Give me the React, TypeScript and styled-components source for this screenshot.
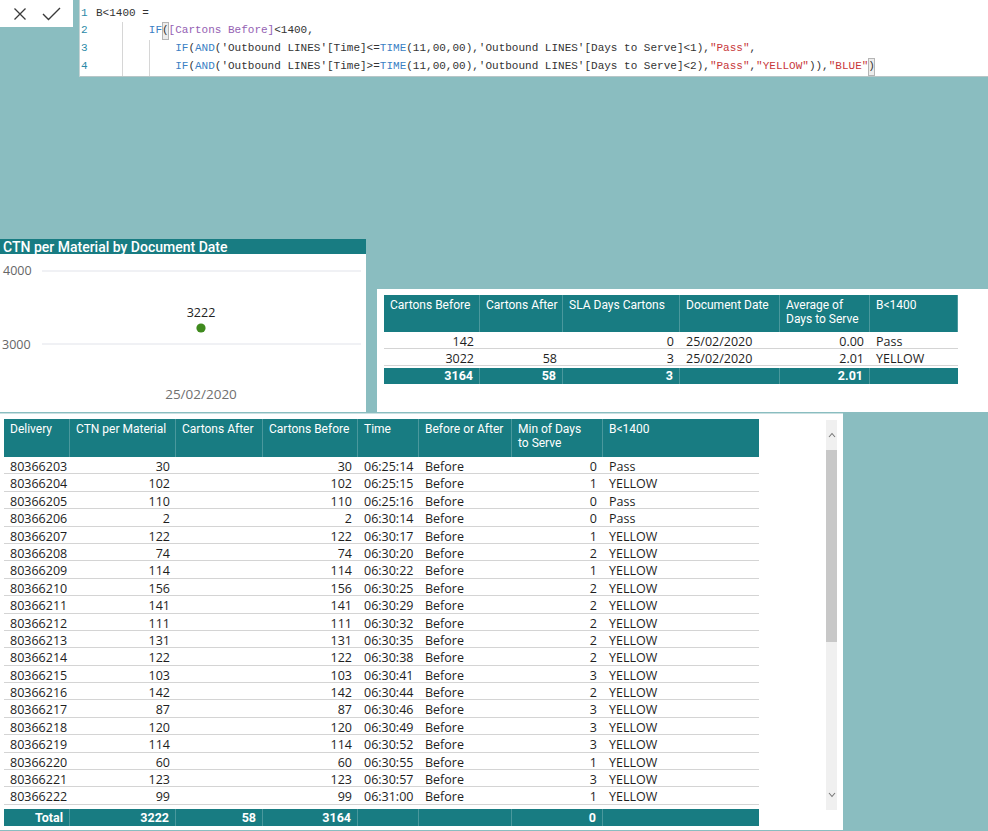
import React from 'react';
import styled, { createGlobalStyle } from 'styled-components';

const TEAL = '#187c82';
const BACK = '#8abdc0';

const GlobalStyle = createGlobalStyle`
  html, body {
    margin: 0;
    padding: 0;
    background: ${BACK};
  }
  body {
    width: 988px;
    height: 831px;
    overflow: hidden;
    font-family: 'Open Sans', 'Noto Sans', sans-serif;
  }
`;

const Page = styled.div`
  width: 988px;
  height: 831px;
  display: flex;
  flex-direction: column;
`;

/* ---------- formula bar ---------- */

const FormulaBar = styled.div`
  display: flex;
  align-items: flex-start;
  gap: 6px;
  height: 78px;
`;

const CommitBox = styled.div`
  width: 73px;
  height: 27px;
  background: #fff;
  display: flex;
  align-items: center;
  justify-content: space-between;
  padding: 0 12px 0 13px;
  box-sizing: border-box;
`;

const Editor = styled.div`
  flex: 1;
  height: 77px;
  background: #fff;
  border-left: 1px solid #c5d3d4;
  border-bottom: 1px solid #b7c6c7;
  box-sizing: border-box;
  padding-top: 4.5px;
  display: flex;
  flex-direction: column;
  font-family: 'Liberation Mono', 'DejaVu Sans Mono', monospace;
  font-size: 11px;
  color: #333;
`;

const CodeLine = styled.div`
  display: flex;
  height: 17.8px;
  line-height: 17.8px;
  white-space: pre;
`;

const LineNo = styled.span`
  width: 16px;
  padding-left: 1px;
  color: #2b8aa8;
  box-sizing: border-box;
`;

const Indent = styled.span<{ $guide?: boolean }>`
  width: 4ch;
  flex: none;
  border-left: 1px solid ${(p) => (p.$guide ? '#d6d6d6' : 'transparent')};
  box-sizing: border-box;
`;

const Kw = styled.span`
  color: #3b7fc4;
`;
const Col = styled.span`
  color: #9462b3;
`;
const Str = styled.span`
  color: #c8373a;
`;
const Match = styled.span`
  background: #ececec;
  outline: 1px solid #b5b5b5;
  outline-offset: -1px;
`;

/* ---------- middle row ---------- */

const MidRow = styled.div`
  display: flex;
  align-items: flex-end;
  gap: 11px;
  margin-top: 161px;
  height: 173px;
`;

const ChartPanel = styled.div`
  width: 366px;
  height: 173px;
  display: flex;
  flex-direction: column;
  background: #fff;
`;

const PanelTitle = styled.div`
  height: 15px;
  background: ${TEAL};
  color: #fff;
  font-family: Roboto, 'Open Sans', sans-serif;
  font-weight: 500;
  font-size: 14px;
  line-height: 16px;
  padding-left: 3px;
  white-space: nowrap;
  overflow: hidden;
`;

const SmallPanel = styled.div`
  flex: 1;
  height: 123px;
  background: #fff;
  padding: 6px 0 0 7px;
  box-sizing: border-box;
`;

const SmallGrid = styled.div`
  display: grid;
  grid-template-columns: 96px 83px 117px 100px 90px 88px;
  width: 574px;
`;

const HeadCell = styled.div<{ $h: number }>`
  height: ${(p) => p.$h}px;
  background: ${TEAL};
  color: #fff;
  font-family: Roboto, 'Open Sans', sans-serif;
  font-size: 12px;
  line-height: 14px;
  padding: 3px 3px 0 6px;
  box-sizing: border-box;
  border-right: 1px solid rgba(255, 255, 255, 0.22);
  white-space: pre;
  overflow: hidden;
  &:last-child {
    border-right: none;
  }
`;

const Cell = styled.div<{ $right?: boolean; $h: number }>`
  height: ${(p) => p.$h}px;
  line-height: ${(p) => p.$h + 2.5}px;
  border-bottom: 1px solid #d4d4d4;
  box-sizing: border-box;
  font-size: 12.5px;
  color: #1e1e1e;
  padding: 0 6px;
  text-align: ${(p) => (p.$right ? 'right' : 'left')};
  white-space: nowrap;
  overflow: hidden;
`;

const TotalCell = styled.div<{ $right?: boolean; $h: number }>`
  height: ${(p) => p.$h}px;
  line-height: ${(p) => p.$h}px;
  background: ${TEAL};
  color: #fff;
  font-family: Roboto, 'Open Sans', sans-serif;
  font-weight: 700;
  font-size: 12.5px;
  padding: 0 6px;
  box-sizing: border-box;
  border-right: 1px solid rgba(255, 255, 255, 0.22);
  text-align: ${(p) => (p.$right ? 'right' : 'left')};
  &:last-child {
    border-right: none;
  }
`;

const Gap = styled.div`
  grid-column: 1 / -1;
  height: 2px;
`;

/* ---------- big table ---------- */

const BigPanel = styled.div`
  width: 843px;
  height: 417px;
  margin-top: 1px;
  background: #fff;
  border-top: 1px solid #c9e0e1;
  box-sizing: border-box;
  display: flex;
  padding: 5px 6px 0 4px;
`;

const BigTable = styled.div`
  width: 755px;
  display: flex;
  flex-direction: column;
`;

const BigGrid = styled.div`
  display: grid;
  grid-template-columns: 66px 106px 87px 95px 61px 93px 91px 156px;
`;

const BodyWindow = styled.div`
  height: 352px;
  overflow: hidden;
`;

const ScrollBar = styled.div`
  margin-left: auto;
  margin-top: 1px;
  width: 11px;
  height: 390px;
  background: #f0f0f0;
  display: flex;
  flex-direction: column;
  align-items: center;
`;

const ScrollArrow = styled.div`
  height: 30px;
  display: flex;
  align-items: center;
  justify-content: center;
`;

const Thumb = styled.div`
  width: 11px;
  height: 192px;
  background: #c8c8c8;
`;

const Spacer = styled.div`
  flex: 1;
`;

/* ---------- data ---------- */

const rows: [string, string, string, string, string, string][] = [
  ['80366203', '30', '06:25:14', 'Before', '0', 'Pass'],
  ['80366204', '102', '06:25:15', 'Before', '1', 'YELLOW'],
  ['80366205', '110', '06:25:16', 'Before', '0', 'Pass'],
  ['80366206', '2', '06:30:14', 'Before', '0', 'Pass'],
  ['80366207', '122', '06:30:17', 'Before', '1', 'YELLOW'],
  ['80366208', '74', '06:30:20', 'Before', '2', 'YELLOW'],
  ['80366209', '114', '06:30:22', 'Before', '1', 'YELLOW'],
  ['80366210', '156', '06:30:25', 'Before', '2', 'YELLOW'],
  ['80366211', '141', '06:30:29', 'Before', '2', 'YELLOW'],
  ['80366212', '111', '06:30:32', 'Before', '2', 'YELLOW'],
  ['80366213', '131', '06:30:35', 'Before', '2', 'YELLOW'],
  ['80366214', '122', '06:30:38', 'Before', '2', 'YELLOW'],
  ['80366215', '103', '06:30:41', 'Before', '3', 'YELLOW'],
  ['80366216', '142', '06:30:44', 'Before', '2', 'YELLOW'],
  ['80366217', '87', '06:30:46', 'Before', '3', 'YELLOW'],
  ['80366218', '120', '06:30:49', 'Before', '3', 'YELLOW'],
  ['80366219', '114', '06:30:52', 'Before', '3', 'YELLOW'],
  ['80366220', '60', '06:30:55', 'Before', '1', 'YELLOW'],
  ['80366221', '123', '06:30:57', 'Before', '3', 'YELLOW'],
  ['80366222', '99', '06:31:00', 'Before', '1', 'YELLOW'],
  ['80366223', '95', '06:31:03', 'Before', '1', 'YELLOW'],
];

const bigHeads = [
  'Delivery',
  'CTN per Material',
  'Cartons After',
  'Cartons Before',
  'Time',
  'Before or After',
  'Min of Days\nto Serve',
  'B<1400',
];

const smallHeads = [
  'Cartons Before',
  'Cartons After',
  'SLA Days Cartons',
  'Document Date',
  'Average of\nDays to Serve',
  'B<1400',
];

const smallRows = [
  ['142', '', '0', '25/02/2020', '0.00', 'Pass'],
  ['3022', '58', '3', '25/02/2020', '2.01', 'YELLOW'],
];
const smallRight = [true, true, true, false, true, false];

const Chart = () => (
  <svg width="366" height="158" viewBox="0 0 366 158">
    <line x1="42" y1="17" x2="361" y2="17" stroke="#e1e3ea" strokeWidth="1" />
    <line x1="42" y1="90" x2="361" y2="90" stroke="#e1e3ea" strokeWidth="1" />
    <text x="3" y="21" fontSize="12.5" fill="#666" fontFamily="'Open Sans', sans-serif">
      4000
    </text>
    <text x="2" y="95" fontSize="12.5" fill="#666" fontFamily="'Open Sans', sans-serif">
      3000
    </text>
    <text x="201" y="63" fontSize="12.5" fill="#222" textAnchor="middle" fontFamily="'Open Sans', sans-serif">
      3222
    </text>
    <circle cx="201" cy="74" r="4.6" fill="#3f8a1e" />
    <text x="201" y="145" fontSize="13.5" fill="#707070" textAnchor="middle" fontFamily="'Open Sans', sans-serif">
      25/02/2020
    </text>
  </svg>
);

const App: React.FC = () => {
  return (
    <>
      <GlobalStyle />
      <Page>
        <FormulaBar>
          <CommitBox>
            <svg width="14" height="14" viewBox="0 0 14 14">
              <path d="M1.5 1.5 L12.5 12.5 M12.5 1.5 L1.5 12.5" stroke="#3a3a3a" strokeWidth="1.3" fill="none" />
            </svg>
            <svg width="19" height="14" viewBox="0 0 19 14">
              <path d="M1 7 L6.5 12.5 L18 1" stroke="#3a3a3a" strokeWidth="1.4" fill="none" />
            </svg>
          </CommitBox>
          <Editor>
            <CodeLine>
              <LineNo>1</LineNo>B&lt;1400 =
            </CodeLine>
            <CodeLine>
              <LineNo>2</LineNo>
              <Indent />
              <Indent $guide />
              <Kw>IF</Kw>
              <Match>(</Match>
              <Col>[Cartons Before]</Col>&lt;1400,
            </CodeLine>
            <CodeLine>
              <LineNo>3</LineNo>
              <Indent />
              <Indent $guide />
              <Indent $guide />
              <Kw>IF</Kw>(<Kw>AND</Kw>('Outbound LINES'[Time]&lt;=<Kw>TIME</Kw>(11,00,00),'Outbound LINES'[Days to
              Serve]&lt;1),<Str>"Pass"</Str>,
            </CodeLine>
            <CodeLine>
              <LineNo>4</LineNo>
              <Indent />
              <Indent $guide />
              <Indent $guide />
              <Kw>IF</Kw>(<Kw>AND</Kw>('Outbound LINES'[Time]&gt;=<Kw>TIME</Kw>(11,00,00),'Outbound LINES'[Days to
              Serve]&lt;2),<Str>"Pass"</Str>,<Str>"YELLOW"</Str>)),<Str>"BLUE"</Str>
              <Match>)</Match>
            </CodeLine>
          </Editor>
        </FormulaBar>

        <MidRow>
          <ChartPanel>
            <PanelTitle>CTN per Material by Document Date</PanelTitle>
            <Chart />
          </ChartPanel>
          <SmallPanel>
            <SmallGrid>
              {smallHeads.map((h) => (
                <HeadCell key={h} $h={37}>
                  {h}
                </HeadCell>
              ))}
              {smallRows.map((r, i) =>
                r.map((v, j) => (
                  <Cell key={`${i}-${j}`} $h={17} $right={smallRight[j]}>
                    {v}
                  </Cell>
                ))
              )}
              <Gap />
              {['3164', '58', '3', '', '2.01', ''].map((v, j) => (
                <TotalCell key={j} $h={16} $right>
                  {v}
                </TotalCell>
              ))}
            </SmallGrid>
          </SmallPanel>
        </MidRow>

        <BigPanel>
          <BigTable>
            <BigGrid>
              {bigHeads.map((h) => (
                <HeadCell key={h} $h={38}>
                  {h}
                </HeadCell>
              ))}
            </BigGrid>
            <BodyWindow>
              <BigGrid>
                {rows.map((r) => (
                  <React.Fragment key={r[0]}>
                    <Cell $h={17.4}>{r[0]}</Cell>
                    <Cell $h={17.4} $right>
                      {r[1]}
                    </Cell>
                    <Cell $h={17.4} />
                    <Cell $h={17.4} $right>
                      {r[1]}
                    </Cell>
                    <Cell $h={17.4}>{r[2]}</Cell>
                    <Cell $h={17.4}>{r[3]}</Cell>
                    <Cell $h={17.4} $right>
                      {r[4]}
                    </Cell>
                    <Cell $h={17.4}>{r[5]}</Cell>
                  </React.Fragment>
                ))}
              </BigGrid>
            </BodyWindow>
            <BigGrid>
              {['Total', '3222', '58', '3164', '', '', '0', ''].map((v, j) => (
                <TotalCell key={j} $h={17} $right>
                  {v}
                </TotalCell>
              ))}
            </BigGrid>
          </BigTable>
          <ScrollBar>
            <ScrollArrow>
              <svg width="8" height="6" viewBox="0 0 8 6">
                <path d="M1 5 L4 1.5 L7 5" stroke="#777" strokeWidth="1.1" fill="none" />
              </svg>
            </ScrollArrow>
            <Thumb />
            <Spacer />
            <ScrollArrow>
              <svg width="8" height="6" viewBox="0 0 8 6">
                <path d="M1 1 L4 4.5 L7 1" stroke="#777" strokeWidth="1.1" fill="none" />
              </svg>
            </ScrollArrow>
          </ScrollBar>
        </BigPanel>
      </Page>
    </>
  );
};

export default App;
